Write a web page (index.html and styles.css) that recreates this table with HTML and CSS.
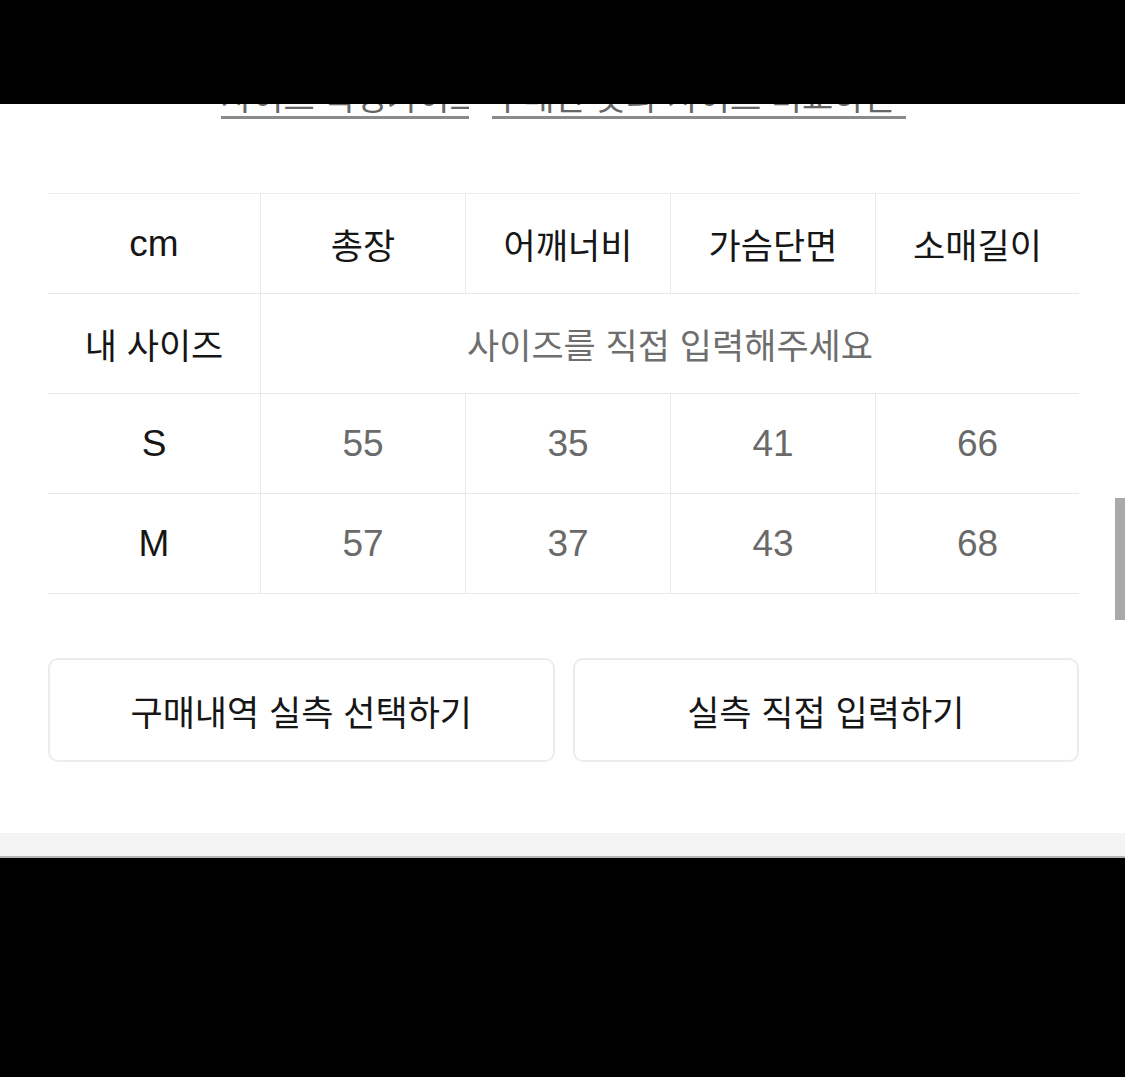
FILE: index.html
```html
<!DOCTYPE html>
<html lang="ko">
<head>
<meta charset="utf-8">
<title>사이즈</title>
<link rel="stylesheet" href="styles.css">
</head>
<body>
<div class="topbar"></div>
<main class="sheet">
  <div class="links">
    <a class="link link-a">사이즈 측정가이드</a>
    <a class="link link-b">구매한 옷과 사이즈 비교하는 법</a>
  </div>

  <div class="size-table">
    <div class="cell head latin first">cm</div>
    <div class="cell head">총장</div>
    <div class="cell head">어깨너비</div>
    <div class="cell head">가슴단면</div>
    <div class="cell head">소매길이</div>

    <div class="cell head first">내 사이즈</div>
    <div class="cell hint span4">사이즈를 직접 입력해주세요</div>

    <div class="cell head latin first">S</div>
    <div class="cell val">55</div>
    <div class="cell val">35</div>
    <div class="cell val">41</div>
    <div class="cell val">66</div>

    <div class="cell head latin first">M</div>
    <div class="cell val">57</div>
    <div class="cell val">37</div>
    <div class="cell val">43</div>
    <div class="cell val">68</div>
  </div>

  <div class="actions">
    <button class="btn">구매내역 실측 선택하기</button>
    <button class="btn">실측 직접 입력하기</button>
  </div>
</main>
<div class="band"></div>
<div class="scrollbar"></div>
</body>
</html>
```

FILE: styles.css
```css
html, body {
  margin: 0;
  padding: 0;
  background: #000;
  height: 100%;
}

body {
  font-family: "Noto Sans CJK KR", "Liberation Sans", sans-serif;
  position: relative;
  overflow: hidden;
}

.topbar {
  height: 104px;
  background: #000;
}

.sheet {
  background: #fff;
  padding: 0 46px 71px 48px;
}

.links {
  height: 15px;
  overflow: hidden;
  display: flex;
  align-items: flex-end;
  gap: 23px;
  padding-left: 173px;
}

.link {
  flex: none;
  display: block;
  font-size: 34px;
  line-height: 40px;
  color: #666;
  border-bottom: 3px solid #8a8a8a;
  white-space: nowrap;
  overflow: hidden;
}

.link-a {
  width: 248px;
  text-align: center;
}

.link-b {
  width: 414px;
  text-align: center;
}

.size-table {
  margin-top: 74px;
  display: grid;
  grid-template-columns: 212px 205px 205px 205px 204px;
  border-top: 1px solid #ececec;
}

.cell {
  height: 99px;
  border-bottom: 1px solid #e9e9e9;
  border-left: 1px solid #e9e9e9;
  display: flex;
  align-items: center;
  justify-content: center;
  font-size: 35px;
  color: #161616;
  box-sizing: content-box;
}

.cell.first {
  border-left: none;
}

.cell.latin {
  font-family: "Liberation Sans", Arial, sans-serif;
  font-size: 37px;
}

.cell.val {
  font-family: "Liberation Sans", Arial, sans-serif;
  font-size: 37px;
  color: #6a6a6a;
}

.cell.hint {
  grid-column: span 4;
  color: #6e6e6e;
}

.actions {
  margin-top: 64px;
  display: grid;
  grid-template-columns: 1fr 1fr;
  gap: 18px;
}

.btn {
  height: 104px;
  background: #fff;
  border: 2px solid #ececec;
  border-radius: 10px;
  font-family: "Noto Sans CJK KR", sans-serif;
  font-size: 35px;
  color: #161616;
  padding: 0;
}

.band {
  height: 23px;
  background: #f4f4f4;
  border-bottom: 2px solid #b5b5b5;
}

.scrollbar {
  position: absolute;
  right: 0;
  top: 498px;
  width: 10px;
  height: 122px;
  background: #a9a9a9;
}
```
